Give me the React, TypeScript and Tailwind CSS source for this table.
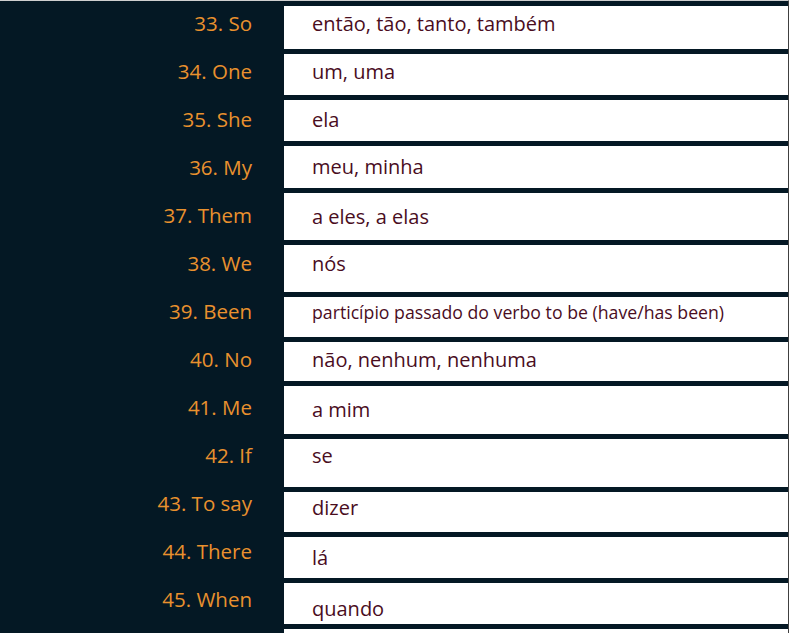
const rows = [
  { label: "33. So", meaning: "então, tão, tanto, também", h: "h-[43px] pb-[8px]" },
  { label: "34. One", meaning: "um, uma", h: "h-[41px] pb-[6px]" },
  { label: "35. She", meaning: "ela", h: "h-[41px] pb-[2px]" },
  { label: "36. My", meaning: "meu, minha", h: "h-[42px]" },
  { label: "37. Them", meaning: "a eles, a elas", h: "h-[47px]" },
  { label: "38. We", meaning: "nós", h: "h-[47px] pb-[10px]" },
  {
    label: "39. Been",
    meaning: "particípio passado do verbo to be (have/has been)",
    h: "h-[40px] pb-[10px]",
    small: true,
  },
  { label: "40. No", meaning: "não, nenhum, nenhuma", h: "h-[39px] pb-[4px]" },
  { label: "41. Me", meaning: "a mim", h: "h-[48px]" },
  { label: "42. If", meaning: "se", h: "h-[48px] pb-[14px]" },
  { label: "43. To say", meaning: "dizer", h: "h-[40px] pb-[8px]" },
  { label: "44. There", meaning: "lá", h: "h-[41px]" },
  { label: "45. When", meaning: "quando", h: "h-[41px] pt-[10px]" },
];

export default function App() {
  return (
    <div className="h-[633px] w-[789px] overflow-hidden border-t border-r border-t-[#cfcfcf] border-r-[#404040] bg-[#041824] font-['Open_Sans',sans-serif]">
      <div className="flex">
        {/* English words, fixed 48px rhythm */}
        <div className="flex w-[284px] shrink-0 flex-col">
          {rows.map((r) => (
            <div
              key={r.label}
              className="flex h-[48px] items-center justify-end pr-[32px] pb-[3px] text-[20.5px] text-[#e9912e]"
            >
              {r.label}
            </div>
          ))}
        </div>

        {/* Portuguese meanings */}
        <div className="flex flex-1 flex-col gap-[5px] pt-[5px]">
          {rows.map((r) => (
            <div
              key={r.label}
              className={`flex items-center bg-white pl-[28px] text-[#4a0d1e] ${r.h} ${
                r.small ? "text-[17.7px]" : "text-[20px]"
              }`}
            >
              {r.meaning}
            </div>
          ))}
          <div className="h-[20px] bg-white" />
        </div>
      </div>
    </div>
  );
}
